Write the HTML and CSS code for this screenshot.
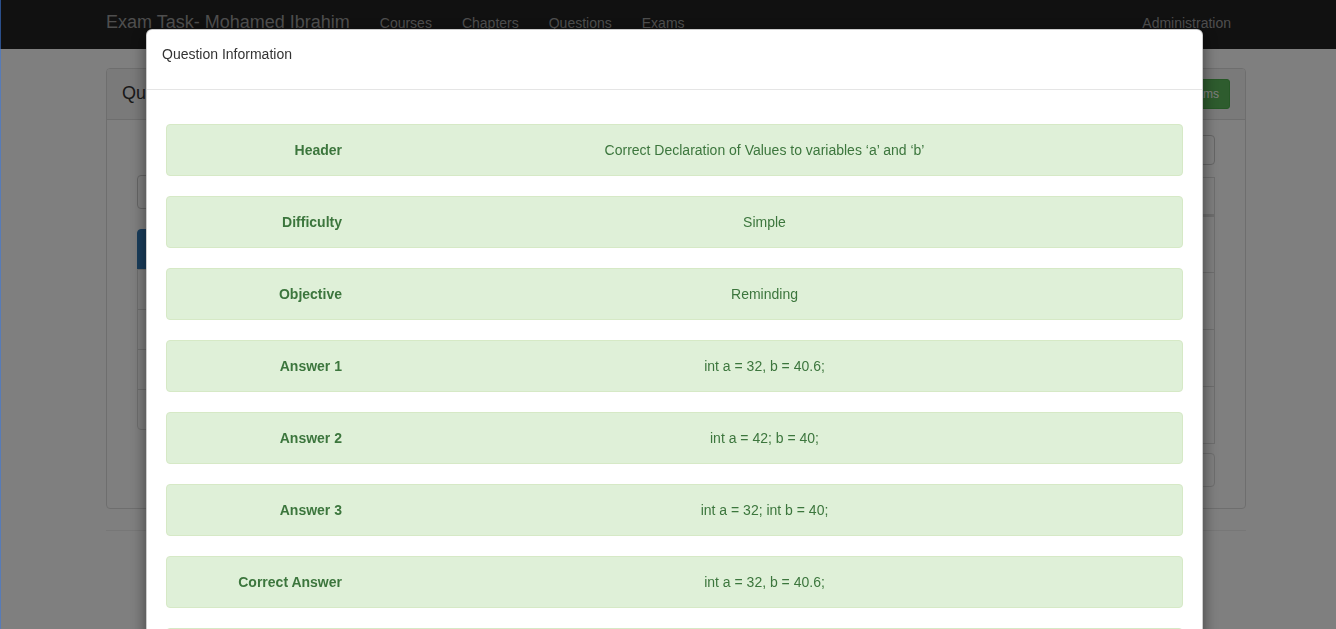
FILE: index.html
```html
<!DOCTYPE html>
<html lang="en">
<head>
<meta charset="utf-8">
<title>Exam Task - Questions</title>
<link rel="stylesheet" href="styles.css">
</head>
<body>
<nav class="navbar">
  <div class="nav-inner">
    <a class="brand" href="#">Exam Task- Mohamed Ibrahim</a>
    <ul class="nav">
      <li><a href="#">Courses</a></li>
      <li><a href="#">Chapters</a></li>
      <li><a href="#">Questions</a></li>
      <li><a href="#">Exams</a></li>
    </ul>
    <ul class="nav nav-right">
      <li><a href="#">Administration</a></li>
    </ul>
  </div>
</nav>

<main class="container">
  <section class="panel">
    <div class="panel-heading">
      <h3 class="panel-title">Questions</h3>
      <a class="btn btn-success" href="#">Add Questions To Exams</a>
    </div>
    <div class="panel-body">
      <div class="col-side">
        <input class="form-control" type="text" placeholder="Search">
        <ul class="list-group">
          <li class="list-item active">All Chapters</li>
          <li class="list-item">Chapter 1</li>
          <li class="list-item">Chapter 2</li>
          <li class="list-item">Chapter 3</li>
          <li class="list-item">Chapter 4</li>
        </ul>
      </div>
      <div class="col-main">
        <div class="select-box">10 per page</div>
        <table class="table">
          <thead><tr><th>Header</th><th>Difficulty</th><th>Objective</th></tr></thead>
          <tbody>
            <tr><td>Correct Declaration of Values</td><td>Simple</td><td>Reminding</td></tr>
            <tr><td>Loops</td><td>Simple</td><td>Understanding</td></tr>
            <tr><td>Functions</td><td>Difficult</td><td>Creativity</td></tr>
            <tr><td>Arrays</td><td>Simple</td><td>Reminding</td></tr>
          </tbody>
        </table>
        <div class="pager">1</div>
      </div>
    </div>
  </section>
  <hr class="rule">
</main>

<div class="backdrop"></div>
<div class="edge-line"></div>

<div class="modal">
  <div class="modal-header">
    <h4 class="modal-title">Question Information</h4>
  </div>
  <div class="modal-body">
    <dl class="info-row"><dt>Header</dt><dd>Correct Declaration of Values to variables ‘a’ and ‘b’</dd></dl>
    <dl class="info-row"><dt>Difficulty</dt><dd>Simple</dd></dl>
    <dl class="info-row"><dt>Objective</dt><dd>Reminding</dd></dl>
    <dl class="info-row"><dt>Answer 1</dt><dd>int a = 32, b = 40.6;</dd></dl>
    <dl class="info-row"><dt>Answer 2</dt><dd>int a = 42; b = 40;</dd></dl>
    <dl class="info-row"><dt>Answer 3</dt><dd>int a = 32; int b = 40;</dd></dl>
    <dl class="info-row"><dt>Correct Answer</dt><dd>int a = 32, b = 40.6;</dd></dl>
    <dl class="info-row"><dt>Chapter</dt><dd>Chapter 1</dd></dl>
  </div>
</div>
</body>
</html>
```

FILE: styles.css
```css
* { box-sizing: border-box; }

html, body {
  margin: 0;
  height: 100%;
  overflow: hidden;
}

body {
  font-family: "Liberation Sans", Arial, sans-serif;
  font-size: 14px;
  line-height: 1.42857;
  color: #333;
  background: #fff;
}

a { text-decoration: none; }

/* Navbar */
.navbar {
  height: 49px;
  background: #222;
}
.nav-inner {
  width: 1140px;
  margin-left: 106px;
  height: 49px;
  display: flex;
  align-items: flex-start;
}
.brand {
  font-size: 18px;
  line-height: 20px;
  padding: 12px 15px 0 0;
  color: #9d9d9d;
}
.nav {
  list-style: none;
  margin: 0;
  padding: 0;
  display: flex;
}
.nav a {
  display: block;
  padding: 13px 15px 0;
  line-height: 20px;
  color: #9d9d9d;
}
.nav-right { margin-left: auto; }

/* Page */
.container {
  width: 1140px;
  margin-left: 106px;
  padding-top: 19px;
}
.panel {
  border: 1px solid #ddd;
  border-radius: 4px;
  background: #fff;
}
.panel-heading {
  height: 51px;
  padding: 0 15px;
  background: #f5f5f5;
  border-bottom: 1px solid #ddd;
  border-radius: 3px 3px 0 0;
  display: flex;
  align-items: center;
  justify-content: space-between;
}
.panel-title {
  margin: 0;
  font-size: 18px;
  font-weight: normal;
  color: #333;
}
.btn {
  display: inline-block;
  height: 30px;
  line-height: 28px;
  padding: 0 10px;
  font-size: 12px;
  border-radius: 3px;
  border: 1px solid #4cae4c;
}
.btn-success {
  background: #5cb85c;
  color: #fff;
}
.panel-body {
  padding: 15px 30px;
  display: flex;
  gap: 30px;
}
.col-side {
  width: 262px;
  padding-top: 40px;
}
.form-control {
  display: block;
  width: 100%;
  height: 34px;
  border: 1px solid #ccc;
  border-radius: 4px;
  padding: 6px 12px;
  font: inherit;
}
.list-group {
  list-style: none;
  margin: 20px 0 0;
  padding: 0;
}
.list-item {
  height: 41px;
  padding: 10px 15px;
  border: 1px solid #ddd;
  margin-bottom: -1px;
}
.list-item:first-child { border-radius: 4px 4px 0 0; }
.list-item:last-child { border-radius: 0 0 4px 4px; margin-bottom: 0; }
.list-item.active {
  background: #337ab7;
  border-color: #337ab7;
  color: #fff;
}
.col-main {
  flex: 1;
}
.select-box {
  height: 30px;
  width: 100%;
  border: 1px solid #ccc;
  border-radius: 4px;
  padding: 4px 10px;
  font-size: 12px;
}
.table {
  width: 100%;
  margin-top: 12px;
  border-collapse: collapse;
  border: 1px solid #ddd;
}
.table th {
  height: 36px;
  text-align: left;
  padding: 8px;
  border: 1px solid #ddd;
  border-bottom: 3px solid #ddd;
}
.table td {
  height: 57px;
  padding: 8px;
  border: 1px solid #ddd;
}
.pager {
  margin-top: 9px;
  margin-bottom: 6px;
  height: 34px;
  border: 1px solid #ddd;
  border-radius: 4px;
  padding: 6px 12px;
}
.rule {
  margin: 21px 0 0;
  border: 0;
  border-top: 1px solid #eee;
}

/* Overlay */
.backdrop {
  position: fixed;
  inset: 0;
  background: rgba(0, 0, 0, 0.5);
}
.edge-line {
  position: fixed;
  top: 0;
  bottom: 0;
  left: 0;
  width: 1px;
  background: rgba(60, 120, 220, 0.6);
}

/* Modal */
.modal {
  position: fixed;
  top: 29px;
  left: 146px;
  width: 1057px;
  background: #fff;
  border: 1px solid rgba(0, 0, 0, 0.2);
  border-radius: 6px;
  box-shadow: 0 5px 15px rgba(0, 0, 0, 0.5);
}
.modal-header {
  padding: 14px 15px 25px;
  border-bottom: 1px solid #e5e5e5;
}
.modal-title {
  margin: 0;
  font-size: 14px;
  font-weight: normal;
  line-height: 20px;
  color: #333;
}
.modal-body {
  padding: 34px 19px 0;
}
.info-row {
  display: flex;
  margin: 0 0 20px;
  padding: 15px;
  background: #dff0d8;
  border: 1px solid #d6e9c6;
  border-radius: 4px;
  color: #3c763d;
  line-height: 20px;
}
.info-row dt {
  width: 160px;
  margin-right: 20px;
  text-align: right;
  font-weight: bold;
}
.info-row dd {
  flex: 1;
  margin: 0;
  text-align: center;
}
```
